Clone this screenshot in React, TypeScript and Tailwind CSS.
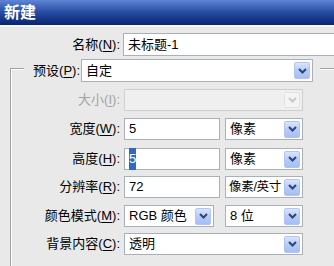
import React from "react";

const FONT = `"Liberation Sans", "Noto Sans CJK SC", sans-serif`;

function Arrow({ disabled = false }: { disabled?: boolean }) {
  return (
    <div
      className={
        disabled
          ? "mr-[2px] flex h-[16px] w-[16px] shrink-0 items-center justify-center rounded-[2px] border border-[#e2e2e2] bg-[#f4f4f4]"
          : "mr-[2px] flex h-[17px] w-[16px] shrink-0 items-center justify-center rounded-[2px] border border-[#b2c5f0] bg-gradient-to-b from-[#d9e5fd] via-[#b7cbf8] to-[#a6bef3]"
      }
    >
      <svg width="9" height="6" viewBox="0 0 9 6">
        <path
          d="M1 1 L4.5 4.5 L8 1"
          fill="none"
          stroke={disabled ? "#c8c8c8" : "#2d4479"}
          strokeWidth="2"
        />
      </svg>
    </div>
  );
}

function Select({
  value,
  w,
  disabled = false,
  tight = false,
}: {
  value: string;
  w: string;
  disabled?: boolean;
  tight?: boolean;
}) {
  return (
    <div
      className={`${w} flex h-full items-center border ${
        disabled ? "border-[#cfcfcf] bg-[#efefef]" : "border-[#aab0b8] bg-white"
      }`}
    >
      <div
        className={`min-w-0 flex-1 overflow-hidden whitespace-nowrap ${
          tight ? "pl-[3px] text-[12.5px] tracking-[-0.3px]" : "pl-[4px]"
        }`}
      >
        {value}
      </div>
      <Arrow disabled={disabled} />
    </div>
  );
}

function Input({ children, w }: { children: React.ReactNode; w: string }) {
  return (
    <div className={`${w} flex h-full items-center border border-[#aab0b8] bg-white pl-[4px] whitespace-nowrap`}>
      {children}
    </div>
  );
}

function Label({ text, k, disabled = false }: { text: string; k: string; disabled?: boolean }) {
  return (
    <div
      className={`w-[111px] shrink-0 whitespace-nowrap pr-[2px] text-right ${
        disabled ? "text-[#a3a3a3]" : ""
      }`}
    >
      {text}(<span className="underline underline-offset-2">{k}</span>):
    </div>
  );
}

export default function App() {
  return (
    <div
      className="h-[266px] w-[334px] overflow-hidden bg-[#e9e9e9] text-[13px] text-black"
      style={{ fontFamily: FONT }}
    >
      <div className="flex h-[25px] items-center bg-gradient-to-b from-[#5f85d6] via-[#264ba2] to-[#0a246e] pl-[4px] text-[16px] font-bold text-white">
        新建
      </div>
      <div className="h-[2px] bg-[#f6f6f6]" />
      <div className="pt-[6px]">
        <div className="flex h-[23px] items-center">
          <div className="w-[121px] shrink-0 whitespace-nowrap pr-[1px] text-right">
            名称(<span className="underline underline-offset-2">N</span>):
          </div>
          <div className="ml-[2px] h-full">
            <Input w="w-[230px]">未标题-1</Input>
          </div>
        </div>

        <div className="ml-[10px] mt-[12px] w-[340px] border-l border-t border-[#a2a2a2] pb-[20px] shadow-[inset_1px_1px_0_#ffffff]">
          <div className="-mt-[10px] ml-[13px] flex h-[23px] w-[296px] items-center bg-[#e9e9e9] pl-[9px] pr-[7px]">
            <div className="w-[47px] shrink-0 whitespace-nowrap text-right">
              预设(<span className="underline underline-offset-2">P</span>):
            </div>
            <div className="ml-[1px] h-full">
              <Select value="自定" w="w-[232px]" />
            </div>
          </div>

          <div className="mt-[7px] flex h-[22px] items-center">
            <Label text="大小" k="I" disabled />
            <div className="ml-[2px] h-full">
              <Select value="" w="w-[179px]" disabled />
            </div>
          </div>

          <div className="mt-[7px] flex h-[22px] items-center">
            <Label text="宽度" k="W" />
            <div className="ml-[2px] flex h-full gap-[5px]">
              <Input w="w-[96px]">5</Input>
              <Select value="像素" w="w-[78px]" />
            </div>
          </div>

          <div className="mt-[8px] flex h-[22px] items-center">
            <Label text="高度" k="H" />
            <div className="ml-[2px] flex h-full gap-[5px]">
              <Input w="w-[96px]">
                <span className="bg-[#316ac5] py-[1px] text-white">5</span>
              </Input>
              <Select value="像素" w="w-[78px]" />
            </div>
          </div>

          <div className="mt-[6px] flex h-[22px] items-center">
            <Label text="分辨率" k="R" />
            <div className="ml-[2px] flex h-full gap-[5px]">
              <Input w="w-[96px]">72</Input>
              <Select value="像素/英寸" w="w-[78px]" tight />
            </div>
          </div>

          <div className="mt-[7px] flex h-[22px] items-center">
            <Label text="颜色模式" k="M" />
            <div className="ml-[2px] flex h-full gap-[11px]">
              <Select value="RGB 颜色" w="w-[90px]" />
              <Select value="8 位" w="w-[78px]" />
            </div>
          </div>

          <div className="mt-[6px] flex h-[22px] items-center">
            <Label text="背景内容" k="C" />
            <div className="ml-[2px] h-full">
              <Select value="透明" w="w-[179px]" />
            </div>
          </div>
        </div>
      </div>
    </div>
  );
}
